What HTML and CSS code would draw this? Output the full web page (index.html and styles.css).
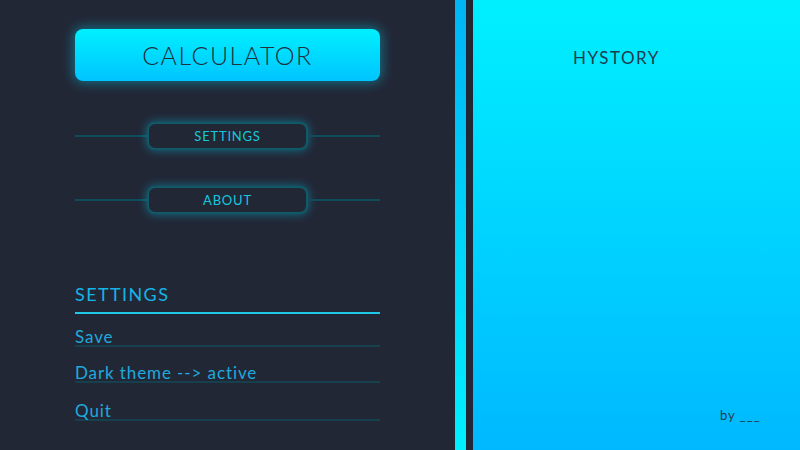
FILE: index.html
```html
<!DOCTYPE html>
<html>
<head>
<meta charset="utf-8">
<link rel="stylesheet" href="styles.css">
</head>
<body>
<div class="app">
  <aside class="left">
    <div class="col">
      <button class="calc">CALCULATOR</button>
      <div class="navrow first"><span class="rule"></span><button class="navbtn">SETTINGS</button><span class="rule"></span></div>
      <div class="navrow second"><span class="rule"></span><button class="navbtn">ABOUT</button><span class="rule"></span></div>
      <div class="settings">
        <div class="sethead">SETTINGS</div>
        <div class="item">Save</div>
        <div class="item">Dark theme --&gt; active</div>
        <div class="item">Quit</div>
      </div>
    </div>
  </aside>
  <div class="stripe"></div>
  <div class="gap"></div>
  <main class="right">
    <div class="history">HYSTORY</div>
    <div class="by">by ___</div>
  </main>
</div>
</body>
</html>
```
FILE: styles.css
```css
* { box-sizing: border-box; }
html, body { margin: 0; padding: 0; }
body { width: 800px; height: 450px; overflow: hidden; background: #222736; font-family: "Lato", "Noto Sans", sans-serif; }
.app { display: flex; height: 450px; }
.left { width: 455px; background: #222736; display: flex; justify-content: center; }
.col { width: 305px; display: flex; flex-direction: column; padding-top: 29px; }
.calc {
  height: 52px; width: 305px; border: none; border-radius: 8px;
  background: linear-gradient(#00f0ff, #00c4ff);
  box-shadow: 0 0 12px 2px rgba(0, 200, 230, 0.45);
  font-family: "Lato", sans-serif; font-weight: 300; font-size: 25px; letter-spacing: 1.5px;
  color: #1f2f3c; padding: 0; padding-bottom: 1px;
}
.navrow { display: flex; align-items: center; }
.navrow.first { margin-top: 41px; }
.navrow.second { margin-top: 36px; }
.rule { flex: 1; height: 2px; background: #0f4c5c; }
.navbtn {
  width: 161px; height: 28px; border: 2px solid #0f5a66; border-radius: 8px;
  background: #222736; color: #14c8dc;
  box-shadow: 0 0 8px 1px rgba(0, 180, 210, 0.45);
  font-family: "Lato", sans-serif; font-size: 13px; letter-spacing: 0.8px; padding: 0;
}
.settings { margin-top: 69px; display: flex; flex-direction: column; }
.sethead {
  font-size: 18px; color: #14b4e6; letter-spacing: 1.4px; line-height: 22px;
  padding-bottom: 7px; border-bottom: 2px solid #1ec8e6;
}
.item {
  font-size: 17px; color: #1eaadc; letter-spacing: 0.9px; line-height: 16px;
  padding-top: 5px; border-bottom: 2px solid #17404e; margin-top: 13px;
}
.item:nth-child(2) { margin-top: 10px; }
.item:last-child { margin-top: 15px; }
.stripe { width: 11px; background: linear-gradient(#00b4f5, #00f0ff); }
.gap { width: 7px; background: #222736; }
.right {
  flex: 1; background: linear-gradient(#00f0ff, #00b8ff);
  display: flex; flex-direction: column; padding-left: 100px; padding-top: 47px; position: relative;
}
.history { font-size: 17px; color: #1e3c4c; letter-spacing: 1.5px; font-family: "Lato", sans-serif; }
.by { position: absolute; left: 247px; top: 407px; font-size: 13px; color: #1e3c4c; letter-spacing: 1px; }
```
